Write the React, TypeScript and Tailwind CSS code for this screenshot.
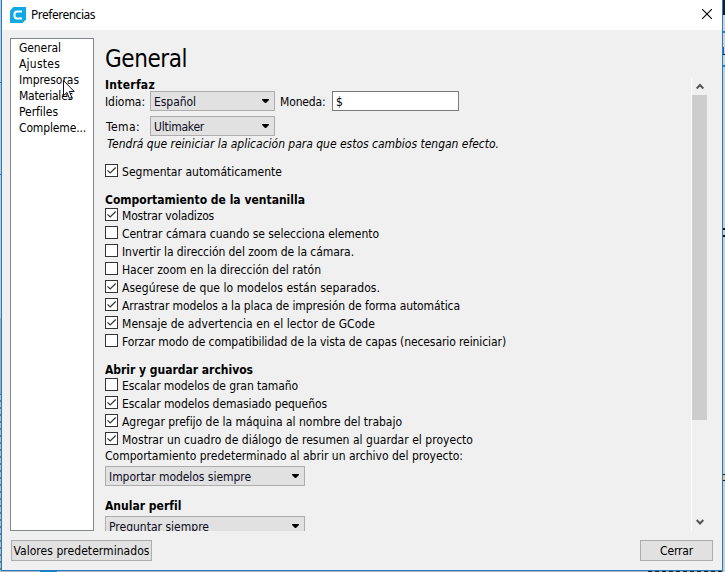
import { useLayoutEffect, useRef, useState } from "react";

/** Single-line label whose tracking is adjusted so that it spans `w` pixels. */
function Label({ w, className = "", children }: { w: number; className?: string; children: string }) {
  const ref = useRef<HTMLSpanElement>(null);
  const [spacing, setSpacing] = useState(0);
  useLayoutEffect(() => {
    const natural = ref.current!.getBoundingClientRect().width;
    setSpacing((w - 1 - natural) / children.length);
  }, []);
  return (
    <span ref={ref} className={`inline-block whitespace-pre ${className}`} style={{ letterSpacing: `${spacing}px` }}>
      {children}
    </span>
  );
}

function CheckRow({ checked, w, children }: { checked?: boolean; w: number; children: string }) {
  return (
    <label className="flex h-[18px] items-start">
      <span className="h-[13px] w-[13px] shrink-0 border border-[#333] bg-white">
        {checked && (
          <svg width="11" height="11" viewBox="0 0 11 11" className="block">
            <path d="M1.5 5.3 4.2 8 9.7 2.5" fill="none" stroke="#333" strokeWidth="1.2" />
          </svg>
        )}
      </span>
      <Label w={w} className="ml-1 leading-4">{children}</Label>
    </label>
  );
}

function Select({ width, w, children }: { width: string; w: number; children: string }) {
  return (
    <div className={`flex h-5 shrink-0 items-center justify-between border border-[#adadad] bg-[#e1e1e1] pl-[3px] pr-[5px] ${width}`}>
      <Label w={w} className="pt-0.5 leading-4 text-[#0b0b1c]">{children}</Label>
      <svg width="7" height="4" viewBox="0 0 7 4"><path d="M0 0h7v1L4 4H3L0 1z" fill="#000" /></svg>
    </div>
  );
}

function Heading({ w, children }: { w: number; children: string }) {
  return <h2 className="h-4 font-bold leading-4"><Label w={w}>{children}</Label></h2>;
}

const sections: [string, number][] = [
  ["General", 43], ["Ajustes", 42], ["Impresoras", 61], ["Materiales", 55], ["Perfiles", 40], ["Compleme...", 68],
];

export default function App() {
  return (
    <div className="relative flex h-[572px] w-[725px] overflow-hidden bg-[#b4b4b6] font-['DejaVu_Sans_Condensed','DejaVu_Sans',sans-serif] text-[12px] text-black [font-stretch:condensed]">
      <div className="flex w-px shrink-0 flex-col">
        <div className="h-[82px] bg-[#c8c8ca]" />
        <div className="h-px bg-[#1883c5]" />
        <div className="h-[91px] bg-[#c8c8ca]" />
        <div className="h-px bg-[#1883c5]" />
        <div className="h-[143px] bg-[#c8c8ca]" />
        <div className="h-[76px] bg-[#a9a9ab]" />
        <div className="h-px bg-[#1883c5]" />
        <div className="flex-1 bg-[repeating-linear-gradient(#bbb_0px,#bbb_5px,#777_5px,#777_7px)]" />
      </div>

      <div className="flex w-[722px] shrink-0 flex-col">
        <div className="flex h-[571px] shrink-0 flex-col border-x border-b border-[#1b80cc] bg-[#f0f0f0]">
          <header className="flex h-[30px] shrink-0 items-center bg-white pl-2">
            <svg width="16" height="16" viewBox="0 0 16 16">
              <path d="M3.5 0H16v12.5L12.5 16H0V3.5z" fill="#10a9e6" />
              <path d="M12 4.5H7.2Q4.5 4.5 4.5 7.2v1.6q0 2.7 2.7 2.7H12" fill="none" stroke="#fff" strokeWidth="2" />
            </svg>
            <Label w={65} className="ml-[5px] font-['Noto_Sans',sans-serif] leading-4">Preferencias</Label>
            <svg width="10" height="10" viewBox="0 0 10 10" className="ml-auto mt-[-2px] mr-[10px]">
              <path d="M0 0 10 10M10 0 0 10" stroke="#000" strokeWidth="1.1" />
            </svg>
          </header>

          <div className="flex h-[501px] shrink-0 pl-2 pt-2">
            <nav className="h-[493px] w-[84px] shrink-0 border border-[#828790] bg-white pl-2 pt-px">
              {sections.map(([name, w]) => (
                <div key={name} className="h-4 leading-4"><Label w={w}>{name}</Label></div>
              ))}
            </nav>

            <main className="ml-[11px] flex w-[602px] shrink-0 flex-col">
              <h1 className="h-10 shrink-0 pt-px text-[24px] leading-10"><Label w={83}>General</Label></h1>
              <div className="flex h-[453px] overflow-hidden">
                <div className="w-[586px] shrink-0">
                  <div className="-mt-px pb-px"><Heading w={51}>Interfaz</Heading></div>
                  <div className="mt-[-3px] flex h-5 items-center">
                    <span className="w-[45px] pt-0.5"><Label w={41}>Idioma:</Label></span>
                    <Select width="w-[125px]" w={43}>Español</Select>
                    <Label w={48} className="ml-[5px] w-12 pt-0.5">Moneda:</Label>
                    <div className="ml-1 flex h-5 w-[127px] items-center border border-[#7a7a7a] bg-white pl-[3px] pt-px">$</div>
                  </div>
                  <div className="mt-[5px] flex h-5 items-center">
                    <span className="w-[45px] pl-px pt-0.5"><Label w={35}>Tema:</Label></span>
                    <Select width="w-[125px]" w={51}>Ultimaker</Select>
                  </div>
                  <div className="h-7 pl-0.5 italic leading-4"><Label w={393}>Tendrá que reiniciar la aplicación para que estos cambios tengan efecto.</Label></div>
                  <CheckRow checked w={161}>Segmentar automáticamente</CheckRow>
                  <div className="pt-[10px]"><Heading w={201}>Comportamiento de la ventanilla</Heading></div>
                  <CheckRow checked w={93}>Mostrar voladizos</CheckRow>
                  <CheckRow w={258}>Centrar cámara cuando se selecciona elemento</CheckRow>
                  <CheckRow w={233}>Invertir la dirección del zoom de la cámara.</CheckRow>
                  <CheckRow w={200}>Hacer zoom en la dirección del ratón</CheckRow>
                  <CheckRow checked w={259}>Asegúrese de que lo modelos están separados.</CheckRow>
                  <CheckRow checked w={339}>Arrastrar modelos a la placa de impresión de forma automática</CheckRow>
                  <CheckRow checked w={254}>Mensaje de advertencia en el lector de GCode</CheckRow>
                  <CheckRow w={385}>Forzar modo de compatibilidad de la vista de capas (necesario reiniciar)</CheckRow>
                  <div className="pt-[10px]"><Heading w={149}>Abrir y guardar archivos</Heading></div>
                  <CheckRow w={177}>Escalar modelos de gran tamaño</CheckRow>
                  <CheckRow checked w={206}>Escalar modelos demasiado pequeños</CheckRow>
                  <CheckRow checked w={281}>Agregar prefijo de la máquina al nombre del trabajo</CheckRow>
                  <CheckRow checked w={352}>Mostrar un cuadro de diálogo de resumen al guardar el proyecto</CheckRow>
                  <div className="-mt-0.5 h-[18px] leading-4"><Label w={359}>Comportamiento predeterminado al abrir un archivo del proyecto:</Label></div>
                  <Select width="w-[200px]" w={143}>Importar modelos siempre</Select>
                  <div className="pt-[12px]"><Heading w={77}>Anular perfil</Heading></div>
                  <div className="pt-[2px]"><Select width="w-[200px]" w={101}>Preguntar siempre</Select></div>
                </div>
                <div className="flex w-4 shrink-0 flex-col border-l border-white">
                  <div className="flex h-[17px] items-center justify-center">
                    <svg width="8" height="7" viewBox="0 0 8 7"><path d="M.7 5.5 4 2 7.3 5.5" fill="none" stroke="#555" strokeWidth="2" /></svg>
                  </div>
                  <div className="h-[325px] bg-[#cdcdcd]" />
                  <div className="mt-auto flex h-[17px] items-center justify-center">
                    <svg width="8" height="7" viewBox="0 0 8 7"><path d="M.7 1 4 4.5 7.3 1" fill="none" stroke="#555" strokeWidth="2" /></svg>
                  </div>
                </div>
              </div>
            </main>
          </div>

          <footer className="mt-[9px] flex h-[21px] shrink-0 justify-between pl-[9px] pr-[9px]">
            <button className="h-[21px] w-[141px] border border-[#adadad] bg-[#e1e1e1] pt-px leading-4"><Label w={137}>Valores predeterminados</Label></button>
            <button className="h-[21px] w-[73px] border border-[#adadad] bg-[#e1e1e1] pt-px leading-4"><Label w={34}>Cerrar</Label></button>
          </footer>
        </div>
        {/* Sliver of the window underneath */}
        <div className="flex h-px">
          <div className="ml-[39px] w-[17px] bg-[#1883c5]" />
          <div className="ml-[591px] w-[74px] bg-[repeating-linear-gradient(90deg,#222_0px,#222_4px,#aaa_4px,#aaa_7px)]" />
        </div>
      </div>

      <div className="flex w-0.5 shrink-0 flex-col">
        <div className="h-[15px] bg-[#1c1c1c]" />
        <div className="h-4 bg-[#d4d4d4]" />
        <div className="h-0.5 bg-[#1883b5]" />
        <div className="h-[14px] bg-[#d4d4d4]" />
        <div className="flex h-[7px]"><div className="w-px bg-[#2a62c0]" /><div className="w-px bg-[#d4d4d4]" /></div>
        <div className="h-px bg-[#111]" />
        <div className="h-[10px] bg-[#d4d4d4]" />
        <div className="h-0.5 bg-[#1883b5]" />
        <div className="h-[161px] bg-[#cdced0]" />
        <div className="h-0.5 bg-[#111]" />
        <div className="h-[5px] bg-[#cdced0]" />
        <div className="h-0.5 bg-[#111]" />
        <div className="h-[237px] bg-[#cdced0]" />
        <div className="h-px bg-[#1a1a3a]" />
        <div className="h-[5px] bg-[#d8c890]" />
        <div className="h-px bg-[#1a1a3a]" />
        <div className="flex-1 bg-[#cdced0]" />
      </div>

      {/* Mouse pointer */}
      <svg width="13" height="20" viewBox="0 0 13 20" className="absolute left-[63px] top-[80px]">
        <path d="M.5.5v15.2l3.4-3.3 2.5 5.9 2.4-1-2.5-5.8h4.9z" fill="#fff" stroke="#101020" />
      </svg>
    </div>
  );
}
